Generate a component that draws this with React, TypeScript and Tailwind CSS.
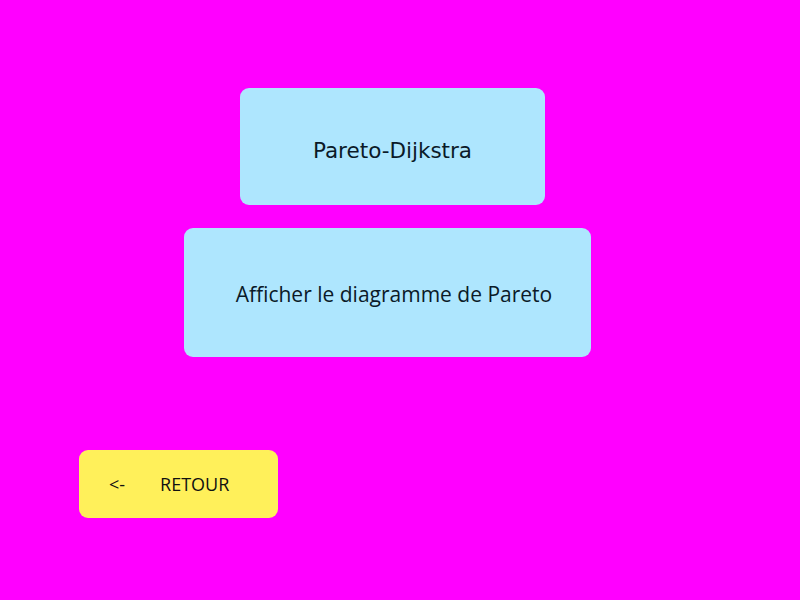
export default function App() {
  return (
    <div className="w-[800px] h-[600px] bg-[#ff00ff] flex flex-col" >
      <div className="mt-[88px] ml-[240px] w-[305px] h-[117px] rounded-[9px] bg-[#aee6fe] flex items-center justify-center pt-[9px]">
        <span className="text-[21.5px] text-[#0b1a28]" style={{ fontFamily: '"DejaVu Sans", sans-serif' }}>Pareto-Dijkstra</span>
      </div>
      <div className="mt-[23px] ml-[184px] w-[407px] h-[129px] rounded-[9px] bg-[#aee6fe] flex items-center justify-center pl-[13px] pt-[4px]">
        <span className="text-[21px] text-[#0b1a28]" style={{ fontFamily: '"Open Sans", sans-serif' }}>Afficher le diagramme de Pareto</span>
      </div>
      <div className="mt-[93px] ml-[79px] w-[199px] h-[68px] rounded-[9px] bg-[#fff05a] flex items-center pl-[30px] text-[18px] text-[#111]" style={{ fontFamily: '"Open Sans", sans-serif' }}>
        <span>&lt;-</span>
        <span className="ml-[35px]">RETOUR</span>
      </div>
    </div>
  );
}
